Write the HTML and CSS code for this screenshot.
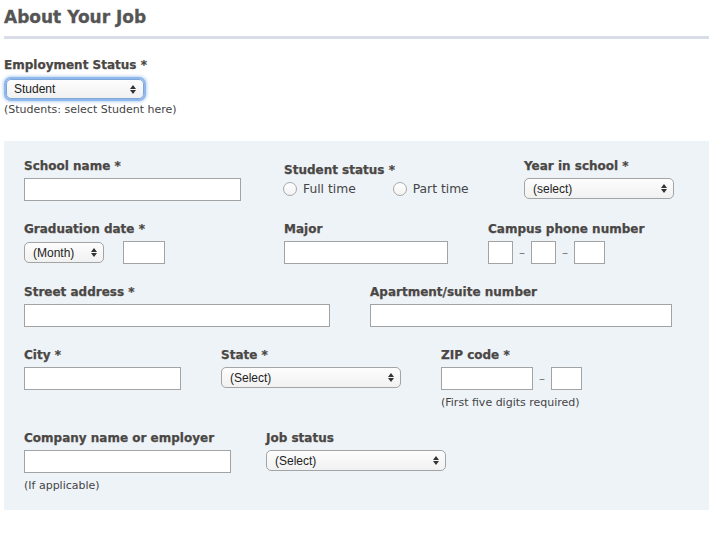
FILE: index.html
```html
<!DOCTYPE html>
<html lang="en">
<head>
  <meta charset="UTF-8">
  <meta name="viewport" content="width=device-width, initial-scale=1.0">
  <title>About Your Job</title>
  <link rel="stylesheet" href="styles.css">
</head>
<body>
  <h1 class="section-title">About Your Job</h1>

  <div class="field">
    <label class="label" for="empStatus">Employment Status *</label>
    <span class="select-wrap focused">
      <select id="empStatus" class="select select-employment"><option>Student</option></select>
    </span>
    <p class="hint">(Students: select Student here)</p>
  </div>

  <div class="panel">
    <div class="row">
      <div class="field col-260">
        <label class="label">School name *</label>
        <input type="text" class="input w-217">
      </div>
      <div class="field col-240 offset">
        <label class="label">Student status *</label>
        <div class="radios">
          <label class="radio"><input type="radio" name="ss"> Full time</label>
          <label class="radio"><input type="radio" name="ss"> Part time</label>
        </div>
      </div>
      <div class="field">
        <label class="label">Year in school *</label>
        <span class="select-wrap"><select class="select w-150"><option>(select)</option></select></span>
      </div>
    </div>

    <div class="row">
      <div class="field col-260">
        <label class="label">Graduation date *</label>
        <div class="inline wide">
          <span class="select-wrap"><select class="select w-80"><option>(Month)</option></select></span>
          <input type="text" class="input w-42">
        </div>
      </div>
      <div class="field col-204">
        <label class="label">Major</label>
        <input type="text" class="input w-164">
      </div>
      <div class="field">
        <label class="label">Campus phone number</label>
        <div class="inline">
          <input type="text" class="input w-25">
          <span class="dash">–</span>
          <input type="text" class="input w-25">
          <span class="dash">–</span>
          <input type="text" class="input w-31">
        </div>
      </div>
    </div>

    <div class="row">
      <div class="field col-346">
        <label class="label">Street address *</label>
        <input type="text" class="input w-306">
      </div>
      <div class="field">
        <label class="label">Apartment/suite number</label>
        <input type="text" class="input w-302">
      </div>
    </div>

    <div class="row">
      <div class="field col-197">
        <label class="label">City *</label>
        <input type="text" class="input w-157">
      </div>
      <div class="field col-220">
        <label class="label">State *</label>
        <span class="select-wrap"><select class="select w-180"><option>(Select)</option></select></span>
      </div>
      <div class="field">
        <label class="label">ZIP code *</label>
        <div class="inline">
          <input type="text" class="input w-92">
          <span class="dash">–</span>
          <input type="text" class="input w-31">
        </div>
        <p class="hint spaced">(First five digits required)</p>
      </div>
    </div>

    <div class="row">
      <div class="field col-242">
        <label class="label">Company name or employer</label>
        <input type="text" class="input w-207">
        <p class="hint spaced">(If applicable)</p>
      </div>
      <div class="field">
        <label class="label">Job status</label>
        <span class="select-wrap"><select class="select w-180"><option>(Select)</option></select></span>
      </div>
    </div>
  </div>
</body>
</html>
```

FILE: styles.css
```css
body {
  margin: 0;
  padding: 0 6px 0 4px;
  font-family: "DejaVu Sans", Verdana, sans-serif;
  color: #454545;
  background: #fff;
}
.section-title {
  margin: 6px 0 16px;
  padding-bottom: 8px;
  border-bottom: 3px solid #d9dde8;
  font-size: 17px;
  line-height: 22px;
  font-weight: bold;
  color: #555;
  -webkit-text-stroke: 0.3px #555;
}
.field {
  display: flex;
  flex-direction: column;
  align-items: flex-start;
}
.label {
  display: block;
  padding-top: 1px;
  font-size: 12px;
  line-height: 18px;
  font-weight: bold;
  color: #4a4744;
  -webkit-text-stroke: 0.25px #4a4744;
  margin-bottom: 3px;
}
.hint {
  margin: 4px 0 0;
  font-size: 11px;
  line-height: 14px;
  color: #444;
}
.hint.spaced {
  margin-top: 6px;
}
.panel {
  margin-top: 24px;
  padding: 15px 20px 17px;
  background: #eef3f8;
}
.row {
  display: flex;
  margin-bottom: 18px;
}
.row:last-child {
  margin-bottom: 0;
}
.col-260 { width: 260px; }
.col-240 { width: 240px; }
.col-204 { width: 204px; }
.col-346 { width: 346px; }
.col-197 { width: 197px; }
.col-220 { width: 220px; }
.col-242 { width: 242px; }
.offset {
  padding-top: 5px;
}
.offset .label {
  margin-bottom: 0;
  padding-top: 0;
}

.input {
  box-sizing: border-box;
  height: 23px;
  margin: 0;
  padding: 2px 4px;
  border: 1px solid #a3a3a3;
  background: #fff;
  font-size: 13px;
}
.w-217 { width: 217px; }
.w-42 { width: 42px; }
.w-164 { width: 164px; }
.w-25 { width: 25px; }
.w-31 { width: 31px; }
.w-306 { width: 306px; }
.w-302 { width: 302px; }
.w-157 { width: 157px; }
.w-92 { width: 92px; }
.w-207 { width: 207px; }

.select-wrap {
  position: relative;
  display: inline-block;
  line-height: 0;
}
.select-wrap::before,
.select-wrap::after {
  content: "";
  position: absolute;
  right: 7px;
  border-left: 3px solid transparent;
  border-right: 3px solid transparent;
  pointer-events: none;
}
.select-wrap::before {
  top: 6px;
  border-bottom: 4px solid #333;
}
.select-wrap::after {
  top: 11px;
  border-top: 4px solid #333;
}
.select {
  -webkit-appearance: none;
  appearance: none;
  box-sizing: border-box;
  height: 21px;
  margin: 0;
  padding: 0 20px 0 8px;
  border: 1px solid #a4a4a4;
  border-radius: 5px;
  background: linear-gradient(#fdfdfd, #f1f1f1);
  font-family: "Liberation Sans", Arial, sans-serif;
  font-size: 12px;
  color: #222;
}
.w-150 { width: 150px; }
.w-80 { width: 80px; }
.w-180 { width: 180px; }
.select-employment {
  width: 138px;
  height: 20px;
  margin-left: 2px;
  margin-top: 2px;
  padding-left: 7px;
  border-color: #7ea7d8;
  box-shadow: 0 0 0 2px #8fb9ec, 0 0 3px 3px rgba(120, 170, 230, 0.5);
}
.focused::before { top: 8px; right: 8px; }
.focused::after { top: 13px; right: 8px; }

.inline {
  display: flex;
  align-items: center;
  gap: 6px;
}
.inline.wide {
  gap: 19px;
}
.dash {
  width: 6px;
  font-size: 12px;
  color: #777;
  text-align: center;
}

.radios {
  display: flex;
  align-items: center;
  height: 20px;
}
.radio {
  display: flex;
  align-items: center;
  font-size: 12.3px;
  color: #454545;
  margin-right: 38px;
}
.radio input {
  -webkit-appearance: none;
  appearance: none;
  width: 14px;
  height: 14px;
  margin: 0 6px 0 -1px;
  border: 1px solid #a8a8a8;
  border-radius: 50%;
  background: linear-gradient(#fff, #f2f2f2);
}
```
